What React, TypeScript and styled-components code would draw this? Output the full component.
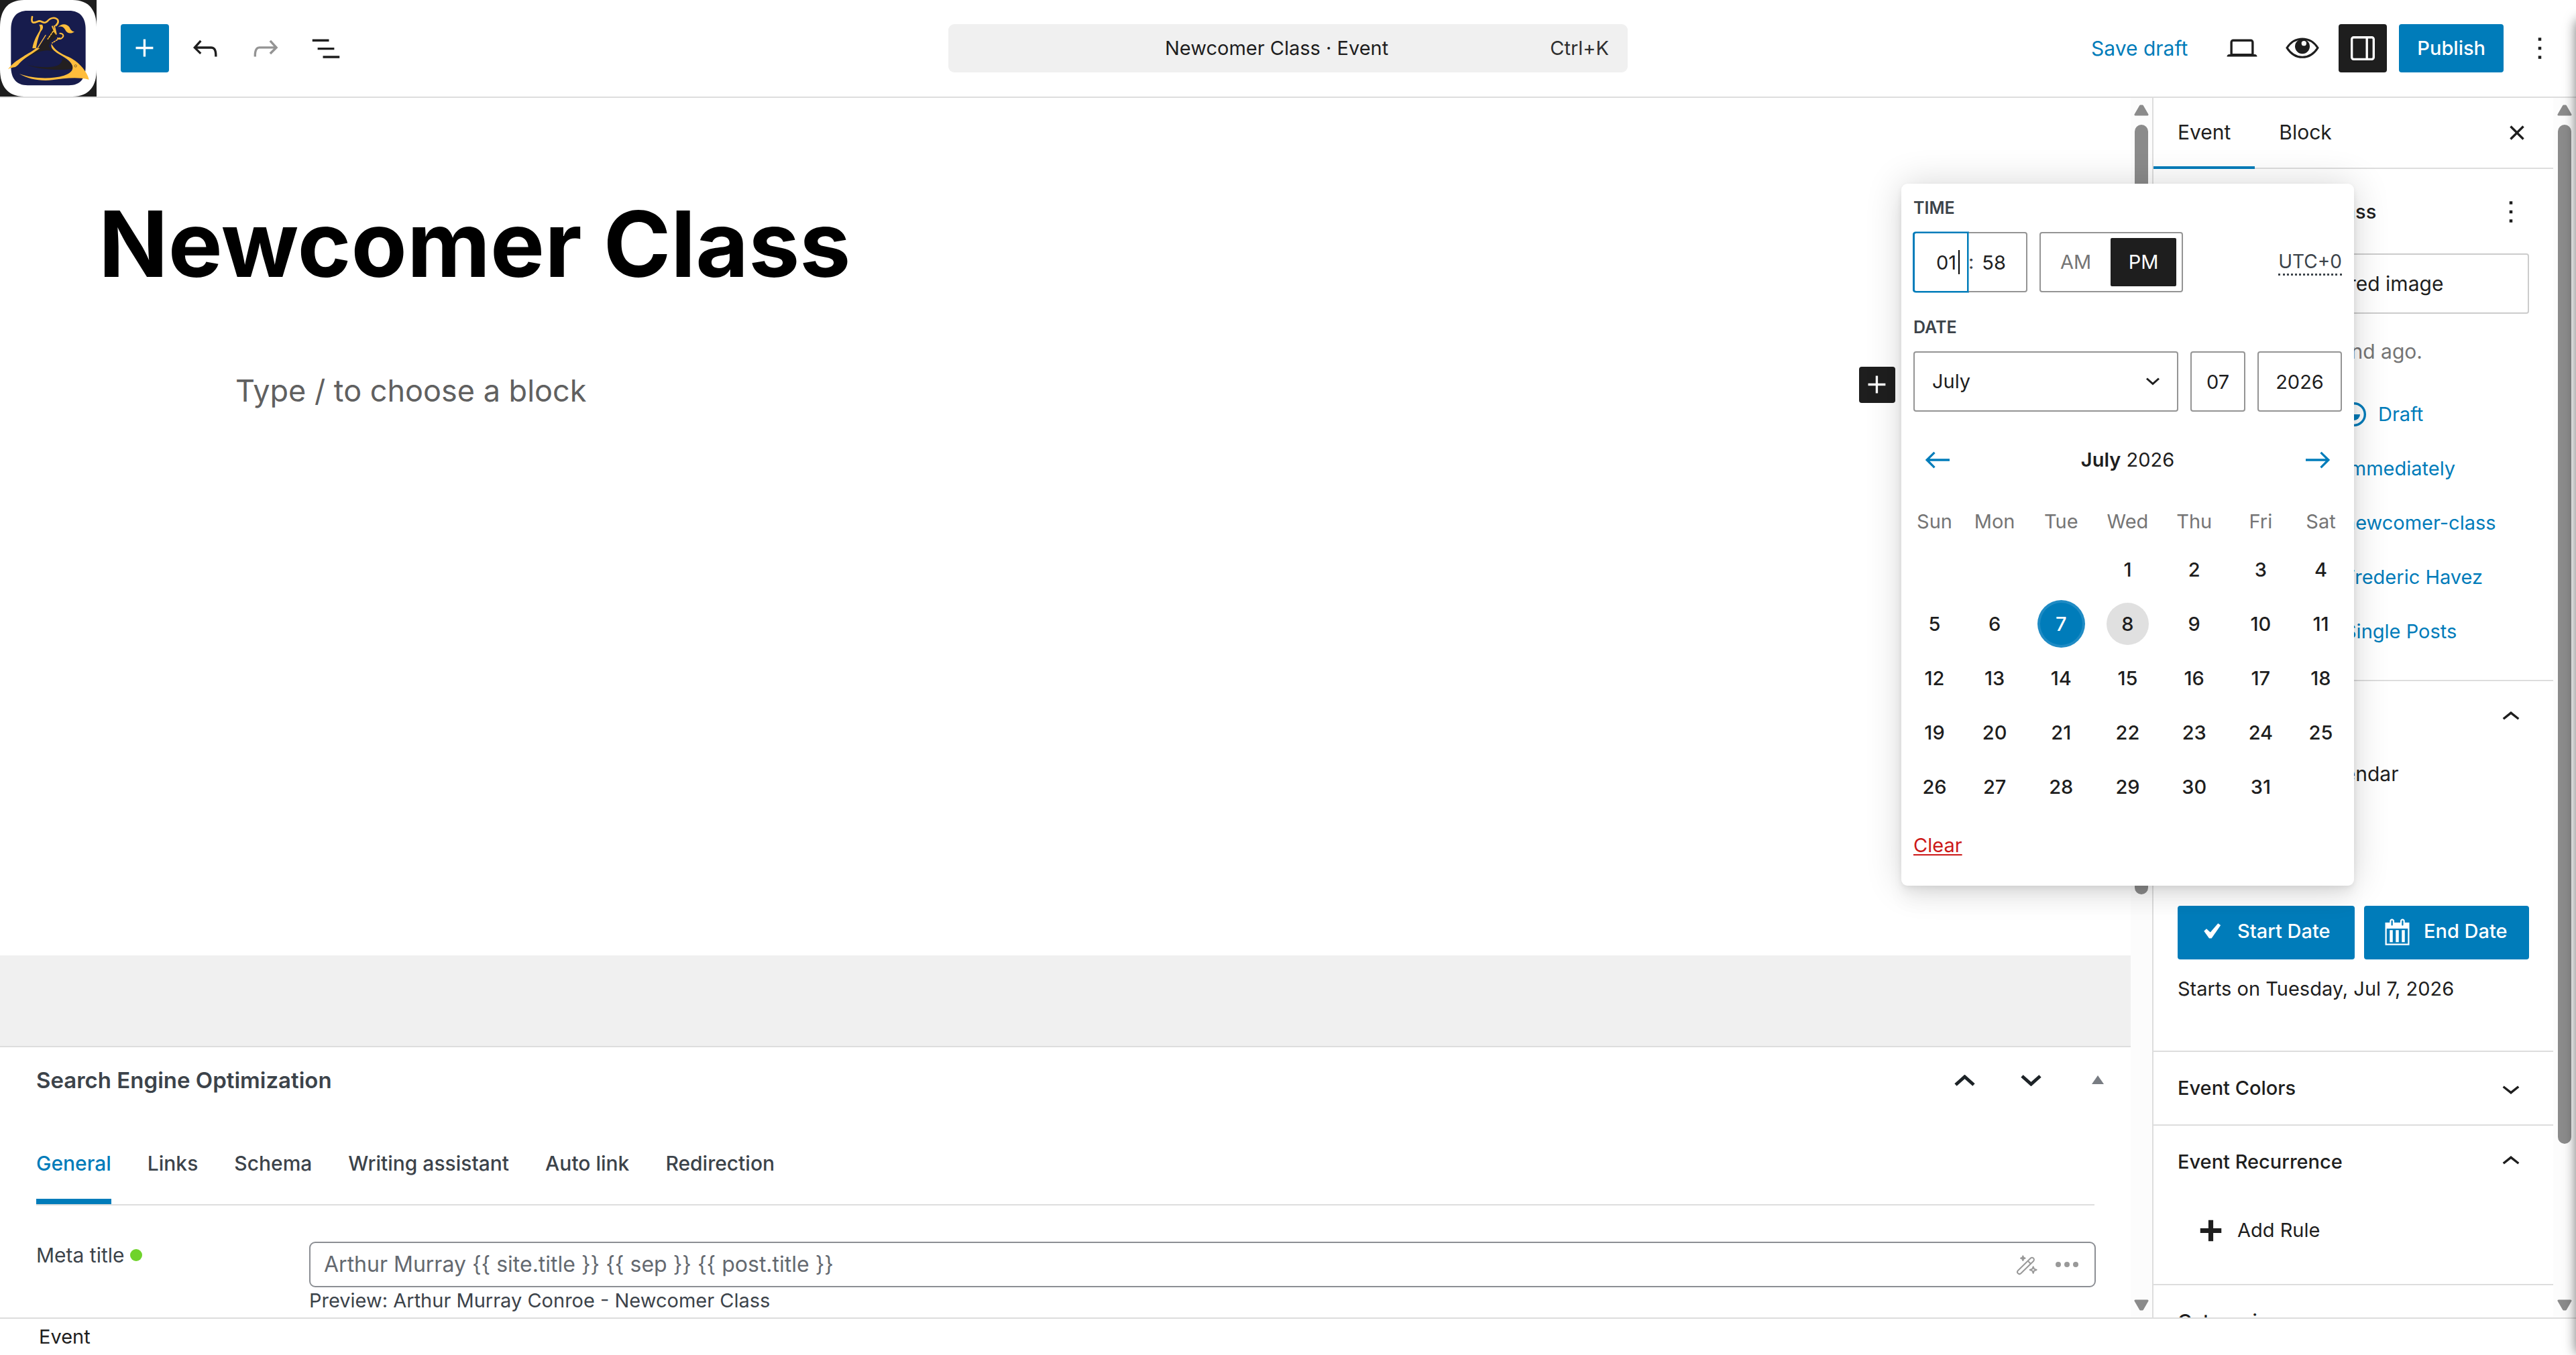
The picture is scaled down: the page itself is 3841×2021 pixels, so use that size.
import React from 'react';
import styled, { createGlobalStyle, css } from 'styled-components';

const BLUE = '#007cba';
const INK = '#1e1e1e';
const SLATE = '#3c434a';
const LINE = '#dddddd';

const GlobalStyle = createGlobalStyle`
  *, *::before, *::after { box-sizing: border-box; }
  body { margin: 0; background: #fff; overflow: hidden; }
  body, button, input, select, textarea {
    font-family: Inter, "Open Sans", "Liberation Sans", sans-serif;
    font-size: 29px;
    line-height: 40px;
    color: ${INK};
  }
  button { margin: 0; padding: 0; border: 0; background: none; cursor: pointer; }
  input, select { margin: 0; outline: 0; }
  h1, h2, p { margin: 0; }
  a { color: ${BLUE}; text-decoration: none; }
  svg { display: block; flex: none; }
`;

/* ---------- icons ---------- */

const PATHS = {
  plus: 'M11 12.5V17.5H12.5V12.5H17.5V11H12.5V6H11V11H6V12.5H11Z',
  undo: 'M18.3 11.7c-.6-.6-1.4-.9-2.3-.9H6.7l2.9-3.3-1.1-1-4.5 5L8.5 16l1-1-2.7-2.7H16c.5 0 .9.2 1.3.5 1 1 1 3.4 1 4.5v.3h1.5v-.2c0-1.5 0-4.3-1.5-5.7z',
  redo: 'M15.6 6.5l-1.1 1 2.9 3.3H8c-.9 0-1.7.3-2.3.9-1.4 1.5-1.4 4.2-1.4 5.6v.2h1.5v-.3c0-1.1 0-3.5 1-4.5.3-.3.7-.5 1.3-.5h9.2L14.5 15l1.1 1.1 4.6-4.6-4.6-5z',
  list: 'M3 6h11v1.5H3V6Zm3.5 5.5h11V13h-11v-1.5ZM21 17H10v1.5h11V17Z',
  laptop: 'M20.5 16h-.7V8c0-1.1-.9-2-2-2H6.2c-1.1 0-2 .9-2 2v8h-.7c-.8 0-1.5.7-1.5 1.5h20c0-.8-.7-1.5-1.5-1.5zM5.7 8c0-.3.2-.5.5-.5h11.6c.3 0 .5.2.5.5v7.6H5.7V8z',
  drawer: 'M18 4H6c-1.1 0-2 .9-2 2v12c0 1.1.9 2 2 2h12c1.1 0 2-.9 2-2V6c0-1.1-.9-2-2-2zm-4 14.5H6c-.3 0-.5-.2-.5-.5V6c0-.3.2-.5.5-.5h8v13zm4.5-.5c0 .3-.2.5-.5.5h-2.5v-13H18c.3 0 .5.2.5.5v12z',
  more: 'M13 19h-2v-2h2v2zm0-6h-2v-2h2v2zm0-6h-2V5h2v2z',
  close: 'M12 13.06l3.712 3.713 1.061-1.06L13.061 12l3.712-3.712-1.06-1.06L12 10.938 8.288 7.227l-1.061 1.06L10.939 12l-3.712 3.712 1.06 1.061L12 13.061z',
  down: 'M17.5 11.6L12 16l-5.5-4.4.9-1.2L12 14l4.5-3.6 1 1.2z',
  up: 'M6.5 12.4L12 8l5.5 4.4-.9 1.2L12 10l-4.5 3.6-1-1.2z',
  left: 'M20 11.2H6.8l3.7-3.7-1-1L3.9 12l5.6 5.5 1-1-3.7-3.7H20z',
  right: 'm14.5 6.5-1 1 3.7 3.7H4v1.6h13.2l-3.7 3.7 1 1 5.6-5.5z',
};

const Icon = ({ name }: { name: keyof typeof PATHS }) => (
  <svg width="54" height="54" viewBox="0 0 24 24" fill="currentColor" fillRule="evenodd" aria-hidden="true">
    <path d={PATHS[name]} />
  </svg>
);

const EyeIcon = () => (
  <svg width="50" height="32" viewBox="0 0 150 96" aria-hidden="true">
    <path d="M6 46C24 18 46 6 75 6s51 12 69 40c-18 28-40 42-69 42S24 74 6 46Z" fill="#fff" stroke={INK} strokeWidth="9" />
    <circle cx="75" cy="40" r="33" fill={INK} />
    <circle cx="82" cy="26" r="11" fill="#fff" />
  </svg>
);

const CheckIcon = () => (
  <svg width="45" height="45" viewBox="0 0 20 20" fill="currentColor" aria-hidden="true">
    <path d="M14.83 4.89l1.34.94-5.81 8.38H9.02L5.78 9.67l1.34-1.25 2.57 2.4z" stroke="currentColor" strokeWidth=".5" />
  </svg>
);

const CalendarIcon = () => (
  <svg width="45" height="45" viewBox="0 0 20 20" fill="currentColor" fillRule="evenodd" aria-hidden="true">
    <path d="M15 4h3v15H2V4h3V3c0-.83.67-1.5 1.5-1.5S8 2.170 8 3v1h4V3c0-.83.67-1.500 1.500-1.500S15 2.170 15 3v1zM6 3v2.500c0 .280.220.500.500.500S7 5.780 7 5.500V3c0-.280-.220-.500-.500-.500S6 2.720 6 3zm7 0v2.500c0 .280.220.500.500.500s.500-.220.500-.500V3c0-.280-.220-.500-.500-.500S13 2.720 13 3zm4 15V8H3v10h14zM7 9v8H5V9h2zm4 0v8H9V9h2zm4 0v8h-2V9h2z" />
  </svg>
);

const HeavyPlusIcon = () => (
  <svg width="45" height="45" viewBox="0 0 20 20" fill="currentColor" aria-hidden="true">
    <path d="M8.400 3h3.200v5.400H17v3.200h-5.400V17H8.400v-5.400H3V8.400h5.400z" />
  </svg>
);

const StatusIcon = () => (
  <svg width="54" height="54" viewBox="0 0 24 24" aria-hidden="true">
    <circle cx="12" cy="12" r="7.250" fill="none" stroke="currentColor" strokeWidth="1.500" />
    <path d="M8 12a4 4 0 0 0 8 0Z" fill="currentColor" />
  </svg>
);

const CaretIcon = ({ flip = false }: { flip?: boolean }) => (
  <svg width="31" height="17" viewBox="0 0 31 17" fill="none" stroke="#1d2327" strokeWidth="5" aria-hidden="true">
    <path d={flip ? 'M2 2l13.500 12L29 2' : 'M2 15L15.500 3 29 15'} />
  </svg>
);

const SelectChevron = () => (
  <svg width="20" height="12" viewBox="0 0 20 12" fill="none" stroke={INK} strokeWidth="3" aria-hidden="true">
    <path d="M1 1.500l9 8 9-8" />
  </svg>
);

const TriangleIcon = () => (
  <svg width="18" height="14" viewBox="0 0 18 14" fill="#787c82" aria-hidden="true">
    <path d="M9 0l9 13H0z" />
  </svg>
);

const ScrollArrow = ({ down = false }: { down?: boolean }) => (
  <svg width="22" height="18" viewBox="0 0 22 18" fill="#8b8b8b" stroke="#8b8b8b" strokeWidth="3" strokeLinejoin="round" aria-hidden="true">
    <path d={down ? 'M2 2h18l-7.500 13h-3z' : 'M2 16h18L12.500 3h-3z'} />
  </svg>
);

const WandIcon = () => (
  <svg width="32" height="32" viewBox="0 0 96 96" fill="none" stroke="#999" strokeWidth="6" strokeLinejoin="round" aria-hidden="true">
    <path d="M9 75l56-55a9 9 0 0 1 13 13L22 88a9 9 0 0 1-13-13Z" />
    <path d="M53 32l13 13" />
    <path d="M77 58l4 10 11 4-11 4-4 11-4-11-11-4 11-4z" />
    <path d="M31 10l3 7 7 3-7 3-3 7-3-7-7-3 7-3z" fill="#999" />
  </svg>
);

const DotsIcon = () => (
  <svg width="34" height="10" viewBox="0 0 34 10" fill="#999" aria-hidden="true">
    <circle cx="4" cy="5" r="4" />
    <circle cx="17" cy="5" r="4" />
    <circle cx="30" cy="5" r="4" />
  </svg>
);

const SiteLogo = () => (
  <svg width="144" height="144" viewBox="0 0 432 432" role="img" aria-label="Arthur Murray">
    <path fill={INK} d="M0 0h432v432H0z" />
    <path fill="#fff" d="M108 0h216c76 0 108 48 108 122v188c0 74-32 122-108 122H108C32 432 0 384 0 310V122C0 48 32 0 108 0Z" />
    <path fill="#171c4d" d="M124 48h184c52 0 75 32 75 84v166c0 52-23 84-75 84H124c-52 0-75-32-75-84V132c0-52 23-84 75-84Z" />
    <path fill="#231f20" d="M92 272c30-28 64-44 82-58 10-22 30-34 48-62l14-34 14 26c8 18-8 32-24 40l-8 22c14 22 44 44 72 60 26 14 36 24 34 42-60 8-150 4-202-18 44 12 112 16 138 2 22-12 24-34-2-46-24-10-66-14-90-4-30 8-48 20-76 30Z" />
    <path fill="#171c4d" d="M108 266c36-24 70-40 106-40 40 2 66 18 64 42-4 24-40 30-78 30-36 0-62-4-92-32Z" />
    <g fill="none" stroke="#ffbd3c" strokeLinecap="round">
      <path strokeWidth="8" d="M144 75c-3 14-4 24 5 26 14 1 21-10 33-6 12 5 18 10 28 2 12-14 22-19 36-16 18 5 18 21 4 33" />
      <path strokeWidth="6" d="M234 118l12 28M243 116l8 36" />
      <path strokeWidth="6" d="M268 149c14 0 20 12 10 20-6 6-14 5-20 2" />
      <path strokeWidth="5" strokeDasharray="7 6" d="M238 140l-24 34M268 170l-34 22" />
      <path strokeWidth="4" d="M204 158l-34 54" />
    </g>
    <path fill="#ffbd3c" d="M175 110h14c6 10 4 20-6 30-12 24-16 46-22 76h-16c4-28 16-52 32-78 4-10 4-18-2-28Z" />
    <path fill="#ffbd3c" d="M259 122c14-18 40-18 52 0 6 12 10 18 22 20-16 12-34 8-42-10-8-14-22-16-32-10Z" />
    <path fill="#ffbd3c" d="M36 310c14-22 40-40 66-56 24-14 48-28 62-40l14 2c-26 20-66 42-84 60-10 10-14 18-26 24-12 2-22 4-32 10Z" />
    <path fill="#ffbd3c" d="M230 196c-4 16 6 28 24 40 34 20 62 34 70 58 6 22-12 36-38 44-60 18-140 14-200-8 40 24 96 34 148 28 48-6 106-16 164-2-8-34-40-72-74-92-30-18-70-24-94-68Z" />
    <circle cx="338" cy="295" r="5" fill="none" stroke="#4d3a1a" strokeWidth="2" />
  </svg>
);

/* ---------- shell ---------- */

const Shell = styled.div`
  position: relative;
  display: flex;
  flex-direction: column;
  height: 100vh;
  overflow: hidden;
`;

const TopBar = styled.header`
  display: grid;
  grid-template-columns: 1fr minmax(0, 1013px) 1fr;
  align-items: center;
  border-bottom: 2px solid ${LINE};
`;

const ToolGroup = styled.div<{ $end?: boolean }>`
  display: flex;
  align-items: center;
  gap: 18px;
  ${(p) => p.$end && 'justify-content: flex-end; padding-right: 18px;'}
`;

const LogoLink = styled.a`
  display: block;
  margin-right: 18px;
`;

const ToolButton = styled.button<{ $tone?: 'blue' | 'dark' | 'faint' }>`
  display: grid;
  place-items: center;
  width: 72px;
  height: 72px;
  border-radius: 4px;
  color: ${(p) => (p.$tone === 'faint' ? '#949494' : p.$tone ? '#fff' : INK)};
  background: ${(p) => (p.$tone === 'blue' ? BLUE : p.$tone === 'dark' ? INK : 'none')};
`;

const TextButton = styled.button<{ $primary?: boolean }>`
  height: 72px;
  padding: 0 27px;
  border-radius: 4px;
  color: ${(p) => (p.$primary ? '#fff' : BLUE)};
  background: ${(p) => (p.$primary ? BLUE : 'none')};
  font-size: ${(p) => (p.$primary ? 29 : 30)}px;
  font-weight: ${(p) => (p.$primary ? 500 : 400)};
`;

const CommandBar = styled.button`
  display: flex;
  align-items: center;
  height: 72px;
  padding: 0 28px 0 82px;
  border-radius: 9px;
  background: #f0f0f0;
`;

const CommandTitle = styled.span`
  flex: 1;
`;

const Shortcut = styled.span`
  color: #2f2f2f;
`;

const Body = styled.div`
  display: flex;
  flex: 1;
  min-height: 0;
`;

const Editor = styled.main`
  display: flex;
  flex-direction: column;
  flex: 1;
  min-width: 0;
`;

const Canvas = styled.section`
  flex: 1;
  min-height: 0;
  overflow: hidden;
`;

const PostTitle = styled.h1`
  padding: 138px 147px 0;
  font-size: 136px;
  line-height: 160px;
  font-weight: 700;
  color: #000;
`;

const BlockRow = styled.div`
  display: flex;
  align-items: flex-start;
  justify-content: space-between;
  padding: 103px 351px 0;
`;

const Prompt = styled.p`
  font-size: 45px;
  line-height: 72px;
  color: #606060;
`;

const Inserter = styled.button`
  display: grid;
  place-items: center;
  width: 54px;
  height: 54px;
  border-radius: 4px;
  color: #fff;
  background: ${INK};
`;

const Spacer = styled.div`
  height: 135px;
  background: #f0f0f0;
`;

/* ---------- scroll rails ---------- */

const Rail = styled.div<{ $width: number }>`
  display: flex;
  flex-direction: column;
  align-items: center;
  justify-content: space-between;
  flex: none;
  width: ${(p) => p.$width}px;
  padding: 9px 0;
  background: #fcfcfc;
`;

const RailTrack = styled.div`
  flex: 1;
  width: 20px;
  margin: 13px 0;
`;

const RailThumb = styled.div`
  border-radius: 10px;
  background: #8b8b8b;
`;

const ScrollRail = ({ share, width }: { share: number; width: number }) => (
  <Rail $width={width} aria-hidden="true">
    <ScrollArrow />
    <RailTrack>
      <RailThumb style={{ height: `${share}%` }} />
    </RailTrack>
    <ScrollArrow down />
  </Rail>
);

/* ---------- SEO box ---------- */

const SeoBox = styled.section`
  border-top: 2px solid ${LINE};
  padding: 0 52px 5px 54px;
  color: ${SLATE};
`;

const SeoHeader = styled.div`
  display: flex;
  align-items: center;
  height: 98px;
`;

const SeoTitle = styled.h2`
  flex: 1;
  font-size: 33px;
  font-weight: 600;
`;

const HandleGroup = styled.div`
  display: flex;
  align-items: center;
  margin-right: -52px;
`;

const HandleButton = styled.button`
  display: grid;
  place-items: center;
  width: 99px;
  height: 72px;
`;

const SeoTabs = styled.div`
  display: flex;
  gap: 54px;
  padding-top: 55px;
  margin-right: 2px;
  border-bottom: 2px solid ${LINE};
`;

const SeoTab = styled.button<{ $active?: boolean }>`
  padding-bottom: 33px;
  border-bottom: 8px solid ${(p) => (p.$active ? BLUE : 'transparent')};
  color: ${(p) => (p.$active ? BLUE : SLATE)};
  font-size: 30px;
  font-weight: 500;
`;

const MetaRow = styled.div`
  display: grid;
  grid-template-columns: 407px 1fr;
  padding-top: 54px;
`;

const MetaLabel = styled.label`
  display: flex;
  align-items: center;
  gap: 9px;
  height: 40px;
  font-size: 30px;
`;

const GreenDot = styled.span`
  width: 18px;
  height: 18px;
  border-radius: 50%;
  background: #6fd32b;
`;

const MetaField = styled.div`
  display: flex;
  align-items: center;
  height: 68px;
  padding: 0 24px 0 20px;
  border: 2px solid #8c8f94;
  border-radius: 9px;
`;

const MetaInput = styled.input`
  flex: 1;
  min-width: 0;
  padding: 0;
  border: 0;
  font-size: 32px;
  color: #646970;
`;

const FieldTool = styled.button`
  display: grid;
  place-items: center;
  margin-left: 27px;
`;

const Preview = styled.p`
  color: ${SLATE};
`;

/* ---------- sidebar ---------- */

const Sidebar = styled.aside`
  display: flex;
  flex: none;
  width: 632px;
  border-left: 2px solid ${LINE};
`;

const SidebarScroll = styled.div`
  flex: 1;
  min-width: 0;
  overflow: hidden;
`;

const SidebarTabs = styled.div`
  display: flex;
  height: 106px;
  padding-right: 18px;
  border-bottom: 2px solid ${LINE};
`;

const SidebarTab = styled.button<{ $active?: boolean }>`
  height: 106px;
  padding: 0 36px;
  border-bottom: 4px solid ${(p) => (p.$active ? BLUE : 'transparent')};
  font-size: 30px;
`;

const CloseSlot = styled.div`
  display: flex;
  align-items: center;
  margin-left: auto;
`;

const Summary = styled.section`
  padding: 28px 36px 36px;
`;

const SummaryTitle = styled.div`
  display: flex;
  align-items: center;
  justify-content: space-between;
  padding-left: 62px;
`;

const SummaryName = styled.h2`
  font-size: 29px;
  font-weight: 500;
`;

const MoreButton = styled.button`
  display: grid;
  place-items: center;
  height: 72px;
`;

const FeaturedButton = styled.button`
  display: block;
  width: 100%;
  height: 90px;
  margin-top: 26px;
  border: 2px solid #cccccc;
  border-radius: 4px;
  font-size: 30px;
`;

const Edited = styled.p`
  margin: 36px 0 38px;
  font-size: 30px;
  color: #757575;
`;

const SummaryRows = styled.div`
  display: flex;
  flex-direction: column;
  gap: 9px;
  padding-left: 236px;
`;

const SummaryValue = styled.button<{ $icon?: boolean }>`
  display: flex;
  align-items: center;
  gap: 9px;
  height: 72px;
  padding-left: ${(p) => (p.$icon ? 0 : 12)}px;
  color: ${BLUE};
  white-space: nowrap;
`;

const Panel = styled.section`
  border-top: 2px solid ${LINE};
`;

const PanelToggle = styled.button`
  display: flex;
  align-items: center;
  justify-content: space-between;
  width: 100%;
  height: 108px;
  padding: 0 36px;
  font-weight: 500;
  svg { margin-left: auto; }
`;

const PanelBody = styled.div<{ $top: number; $bottom: number }>`
  padding: ${(p) => p.$top}px 36px ${(p) => p.$bottom}px;
`;

const CheckRow = styled.label`
  display: flex;
  align-items: center;
  gap: 14px;
  height: 40px;
  margin-bottom: 177px;
  font-size: 30px;
  input { width: 36px; height: 36px; }
`;

const DateButtons = styled.div`
  display: grid;
  grid-template-columns: 264fr 246fr;
  gap: 14px;
  margin-bottom: 24px;
`;

const WideButton = styled.button<{ $filled?: boolean }>`
  display: flex;
  align-items: center;
  gap: 17px;
  height: 80px;
  padding: 0 27px;
  border-radius: 4px;
  white-space: nowrap;
  ${(p) =>
    p.$filled &&
    css`
      padding-bottom: 4px;
      color: #fff;
      background: ${BLUE};
      font-weight: 500;
    `}
`;

/* ---------- date popover ---------- */

const Popover = styled.div`
  position: absolute;
  top: 274px;
  right: 331px;
  width: 675px;
  padding: 20px 18px 40px;
  border-radius: 9px;
  background: #fff;
  box-shadow: 0 2px 7px rgba(0, 0, 0, 0.05), 0 9px 14px rgba(0, 0, 0, 0.04),
    0 27px 27px rgba(0, 0, 0, 0.03), 0 0 54px rgba(0, 0, 0, 0.16);
`;

const Legend = styled.div`
  margin-bottom: 20px;
  font-size: 25px;
  line-height: 32px;
  font-weight: 600;
  text-transform: uppercase;
  color: ${SLATE};
`;

const FieldRow = styled.div`
  display: flex;
  align-items: center;
  gap: 18px;
  height: 90px;
  margin-bottom: 36px;
`;

const TimeBox = styled.div`
  position: relative;
  display: flex;
  align-items: center;
  width: 170px;
  height: 90px;
  border: 2px solid #949494;
  border-radius: 4px;
  color: ${SLATE};
`;

const HourInput = styled.input`
  flex: none;
  width: 82px;
  height: 90px;
  margin-left: -2px;
  padding: 0 16px 0 0;
  border: 2px solid ${BLUE};
  border-radius: 4px 0 0 4px;
  box-shadow: -1px 0 0 ${BLUE}, 0 0 0 1px rgba(0, 124, 186, 0.5);
  text-align: right;
  caret-color: transparent;
`;

const TextCaret = styled.span`
  position: absolute;
  left: 65px;
  width: 2px;
  height: 36px;
  background: #000;
`;

const MinuteInput = styled.input`
  flex: 1;
  min-width: 0;
  height: 80px;
  padding: 0 0 0 12px;
  border: 0;
  background: none;
`;

const Meridiem = styled.div`
  display: grid;
  grid-template-columns: 104px 98px;
  justify-content: space-between;
  align-items: center;
  width: 214px;
  height: 90px;
  padding-right: 8px;
  border: 2px solid #949494;
  border-radius: 4px;
`;

const MeridiemButton = styled.button<{ $on?: boolean }>`
  height: 72px;
  border-radius: 2px;
  color: ${(p) => (p.$on ? '#fff' : '#757575')};
  background: ${(p) => (p.$on ? INK : 'none')};
`;

const Zone = styled.span`
  margin-left: auto;
  font-size: 28px;
  line-height: 36px;
  color: ${SLATE};
  border-bottom: 3px dotted ${SLATE};
`;

const MonthWrap = styled.div`
  display: grid;
  flex: 1;
  align-items: center;
  > * { grid-area: 1 / 1; }
  svg { justify-self: end; margin-right: 28px; pointer-events: none; }
`;

const fieldBox = css`
  height: 90px;
  border: 2px solid #949494;
  border-radius: 4px;
  background: #fff;
`;

const MonthSelect = styled.select`
  ${fieldBox}
  appearance: none;
  width: 100%;
  padding: 0 26px;
`;

const NumberInput = styled.input<{ $wide?: boolean }>`
  ${fieldBox}
  width: ${(p) => (p.$wide ? 126 : 82)}px;
  padding: 0;
  text-align: center;
`;

const MonthNav = styled.div`
  display: flex;
  align-items: center;
  justify-content: space-between;
  height: 72px;
  margin-bottom: 36px;
  padding: 0 9px;
`;

const NavButton = styled.button`
  color: ${BLUE};
`;

const MonthName = styled.p`
  strong { font-weight: 600; }
`;

const Calendar = styled.div`
  display: grid;
  grid-template-columns: 67px repeat(5, 1fr) 67px;
  grid-template-rows: 42px;
  gap: 18px 9px;
  justify-items: center;
`;

const outerColumn = (col: number) => (col === 1 ? 'start' : col === 7 ? 'end' : 'center');

const Weekday = styled.span<{ $col: number }>`
  justify-self: ${(p) => outerColumn(p.$col)};
  width: 63px;
  text-align: center;
  color: #757575;
`;

const Day = styled.button<{ $col: number; $state?: 'selected' | 'event' }>`
  grid-column: ${(p) => p.$col};
  justify-self: ${(p) => outerColumn(p.$col)};
  width: 63px;
  height: 63px;
  border-radius: 50%;
  font-weight: 500;
  ${(p) =>
    p.$state === 'selected' &&
    css`
      color: #fff;
      background: ${BLUE};
      box-shadow: 0 0 0 4px #1f8bc4;
    `}
  ${(p) => p.$state === 'event' && 'background: #e0e0e0;'}
`;

const ClearButton = styled.button`
  display: block;
  margin-top: 36px;
  color: #cc1818;
  text-decoration: underline;
  text-underline-offset: 3px;
`;

/* ---------- footer ---------- */

const Footer = styled.footer`
  display: flex;
  align-items: center;
  height: 56px;
  padding: 0 58px;
  border-top: 2px solid ${LINE};
`;

const WindowEdge = styled.div`
  position: absolute;
  top: 28px;
  bottom: 0;
  left: 100%;
  width: 20px;
  border-radius: 20px;
  box-shadow: 0 0 18px rgba(0, 0, 0, 0.55);
`;

const SEO_TABS = ['General', 'Links', 'Schema', 'Writing assistant', 'Auto link', 'Redirection'];
const WEEKDAYS = ['Sun', 'Mon', 'Tue', 'Wed', 'Thu', 'Fri', 'Sat'];
const FIRST_WEEKDAY = 3;
const DAYS = Array.from({ length: 31 }, (_, i) => i + 1);

const DatePopover = () => (
  <Popover role="dialog" aria-label="Start date">
    <Legend>Time</Legend>
    <FieldRow>
      <TimeBox>
        <HourInput aria-label="Hours" defaultValue="01" />
        <TextCaret />
        :
        <MinuteInput aria-label="Minutes" defaultValue="58" />
      </TimeBox>
      <Meridiem>
        <MeridiemButton>AM</MeridiemButton>
        <MeridiemButton $on>PM</MeridiemButton>
      </Meridiem>
      <Zone>UTC+0</Zone>
    </FieldRow>
    <Legend>Date</Legend>
    <FieldRow>
      <MonthWrap>
        <MonthSelect aria-label="Month" defaultValue="July">
          <option>July</option>
        </MonthSelect>
        <SelectChevron />
      </MonthWrap>
      <NumberInput aria-label="Day" defaultValue="07" />
      <NumberInput aria-label="Year" defaultValue="2026" $wide />
    </FieldRow>
    <MonthNav>
      <NavButton aria-label="Previous month"><Icon name="left" /></NavButton>
      <MonthName><strong>July</strong> 2026</MonthName>
      <NavButton aria-label="Next month"><Icon name="right" /></NavButton>
    </MonthNav>
    <Calendar>
      {WEEKDAYS.map((d, i) => <Weekday key={d} $col={i + 1}>{d}</Weekday>)}
      {DAYS.map((d) => (
        <Day
          key={d}
          $col={((d - 1 + FIRST_WEEKDAY) % 7) + 1}
          $state={d === 7 ? 'selected' : d === 8 ? 'event' : undefined}
        >
          {d}
        </Day>
      ))}
    </Calendar>
    <ClearButton>Clear</ClearButton>
  </Popover>
);

export default function App() {
  return (
    <Shell>
      <GlobalStyle />
      <TopBar>
        <ToolGroup>
          <LogoLink href="#dashboard"><SiteLogo /></LogoLink>
          <ToolButton $tone="blue" aria-label="Add block"><Icon name="plus" /></ToolButton>
          <ToolButton aria-label="Undo"><Icon name="undo" /></ToolButton>
          <ToolButton $tone="faint" aria-label="Redo"><Icon name="redo" /></ToolButton>
          <ToolButton aria-label="Document overview"><Icon name="list" /></ToolButton>
        </ToolGroup>
        <CommandBar>
          <CommandTitle>Newcomer Class · Event</CommandTitle>
          <Shortcut>Ctrl+K</Shortcut>
        </CommandBar>
        <ToolGroup $end>
          <TextButton>Save draft</TextButton>
          <ToolButton aria-label="View"><Icon name="laptop" /></ToolButton>
          <ToolButton aria-label="Preview"><EyeIcon /></ToolButton>
          <ToolButton $tone="dark" aria-label="Settings"><Icon name="drawer" /></ToolButton>
          <TextButton $primary>Publish</TextButton>
          <ToolButton aria-label="Options"><Icon name="more" /></ToolButton>
        </ToolGroup>
      </TopBar>

      <Body>
        <Editor>
          <Canvas>
            <PostTitle>Newcomer Class</PostTitle>
            <BlockRow>
              <Prompt>Type / to choose a block</Prompt>
              <Inserter aria-label="Add block"><Icon name="plus" /></Inserter>
            </BlockRow>
          </Canvas>
          <Spacer />
          <SeoBox>
            <SeoHeader>
              <SeoTitle>Search Engine Optimization</SeoTitle>
              <HandleGroup>
                <HandleButton aria-label="Move up"><CaretIcon /></HandleButton>
                <HandleButton aria-label="Move down"><CaretIcon flip /></HandleButton>
                <HandleButton aria-label="Toggle panel"><TriangleIcon /></HandleButton>
              </HandleGroup>
            </SeoHeader>
            <SeoTabs>
              {SEO_TABS.map((t, i) => <SeoTab key={t} $active={i === 0}>{t}</SeoTab>)}
            </SeoTabs>
            <MetaRow>
              <MetaLabel htmlFor="meta-title">Meta title<GreenDot /></MetaLabel>
              <div>
                <MetaField>
                  <MetaInput id="meta-title" defaultValue="Arthur Murray {{ site.title }} {{ sep }} {{ post.title }}" />
                  <FieldTool aria-label="Generate"><WandIcon /></FieldTool>
                  <FieldTool aria-label="More"><DotsIcon /></FieldTool>
                </MetaField>
                <Preview>Preview: Arthur Murray Conroe - Newcomer Class</Preview>
              </div>
            </MetaRow>
          </SeoBox>
        </Editor>
        <ScrollRail share={66} width={32} />

        <Sidebar>
          <SidebarScroll>
            <SidebarTabs>
              <SidebarTab $active>Event</SidebarTab>
              <SidebarTab>Block</SidebarTab>
              <CloseSlot>
                <ToolButton aria-label="Close settings"><Icon name="close" /></ToolButton>
              </CloseSlot>
            </SidebarTabs>
            <Summary>
              <SummaryTitle>
                <SummaryName>Newcomer Class</SummaryName>
                <MoreButton aria-label="Actions"><Icon name="more" /></MoreButton>
              </SummaryTitle>
              <FeaturedButton>Set featured image</FeaturedButton>
              <Edited>Last edited a second ago.</Edited>
              <SummaryRows>
                <SummaryValue $icon><StatusIcon />Draft</SummaryValue>
                <SummaryValue>Immediately</SummaryValue>
                <SummaryValue>newcomer-class</SummaryValue>
                <SummaryValue>Frederic Havez</SummaryValue>
                <SummaryValue>Single Posts</SummaryValue>
              </SummaryRows>
            </Summary>
            <Panel>
              <PanelToggle aria-label="Event settings"><Icon name="up" /></PanelToggle>
              <PanelBody $top={10} $bottom={72}>
                <CheckRow>
                  <input type="checkbox" />
                  Display on calendar
                </CheckRow>
                <DateButtons>
                  <WideButton $filled><CheckIcon />Start Date</WideButton>
                  <WideButton $filled><CalendarIcon />End Date</WideButton>
                </DateButtons>
                <p>Starts on Tuesday, Jul 7, 2026</p>
              </PanelBody>
            </Panel>
            <Panel>
              <PanelToggle>Event Colors<Icon name="down" /></PanelToggle>
            </Panel>
            <Panel>
              <PanelToggle>Event Recurrence<Icon name="up" /></PanelToggle>
              <PanelBody $top={8} $bottom={40}>
                <WideButton><HeavyPlusIcon />Add Rule</WideButton>
              </PanelBody>
            </Panel>
            <Panel>
              <PanelToggle>Categories</PanelToggle>
            </Panel>
          </SidebarScroll>
          <ScrollRail share={87.4} width={34} />
        </Sidebar>
      </Body>

      <Footer>Event</Footer>
      <DatePopover />
      <WindowEdge />
    </Shell>
  );
}
